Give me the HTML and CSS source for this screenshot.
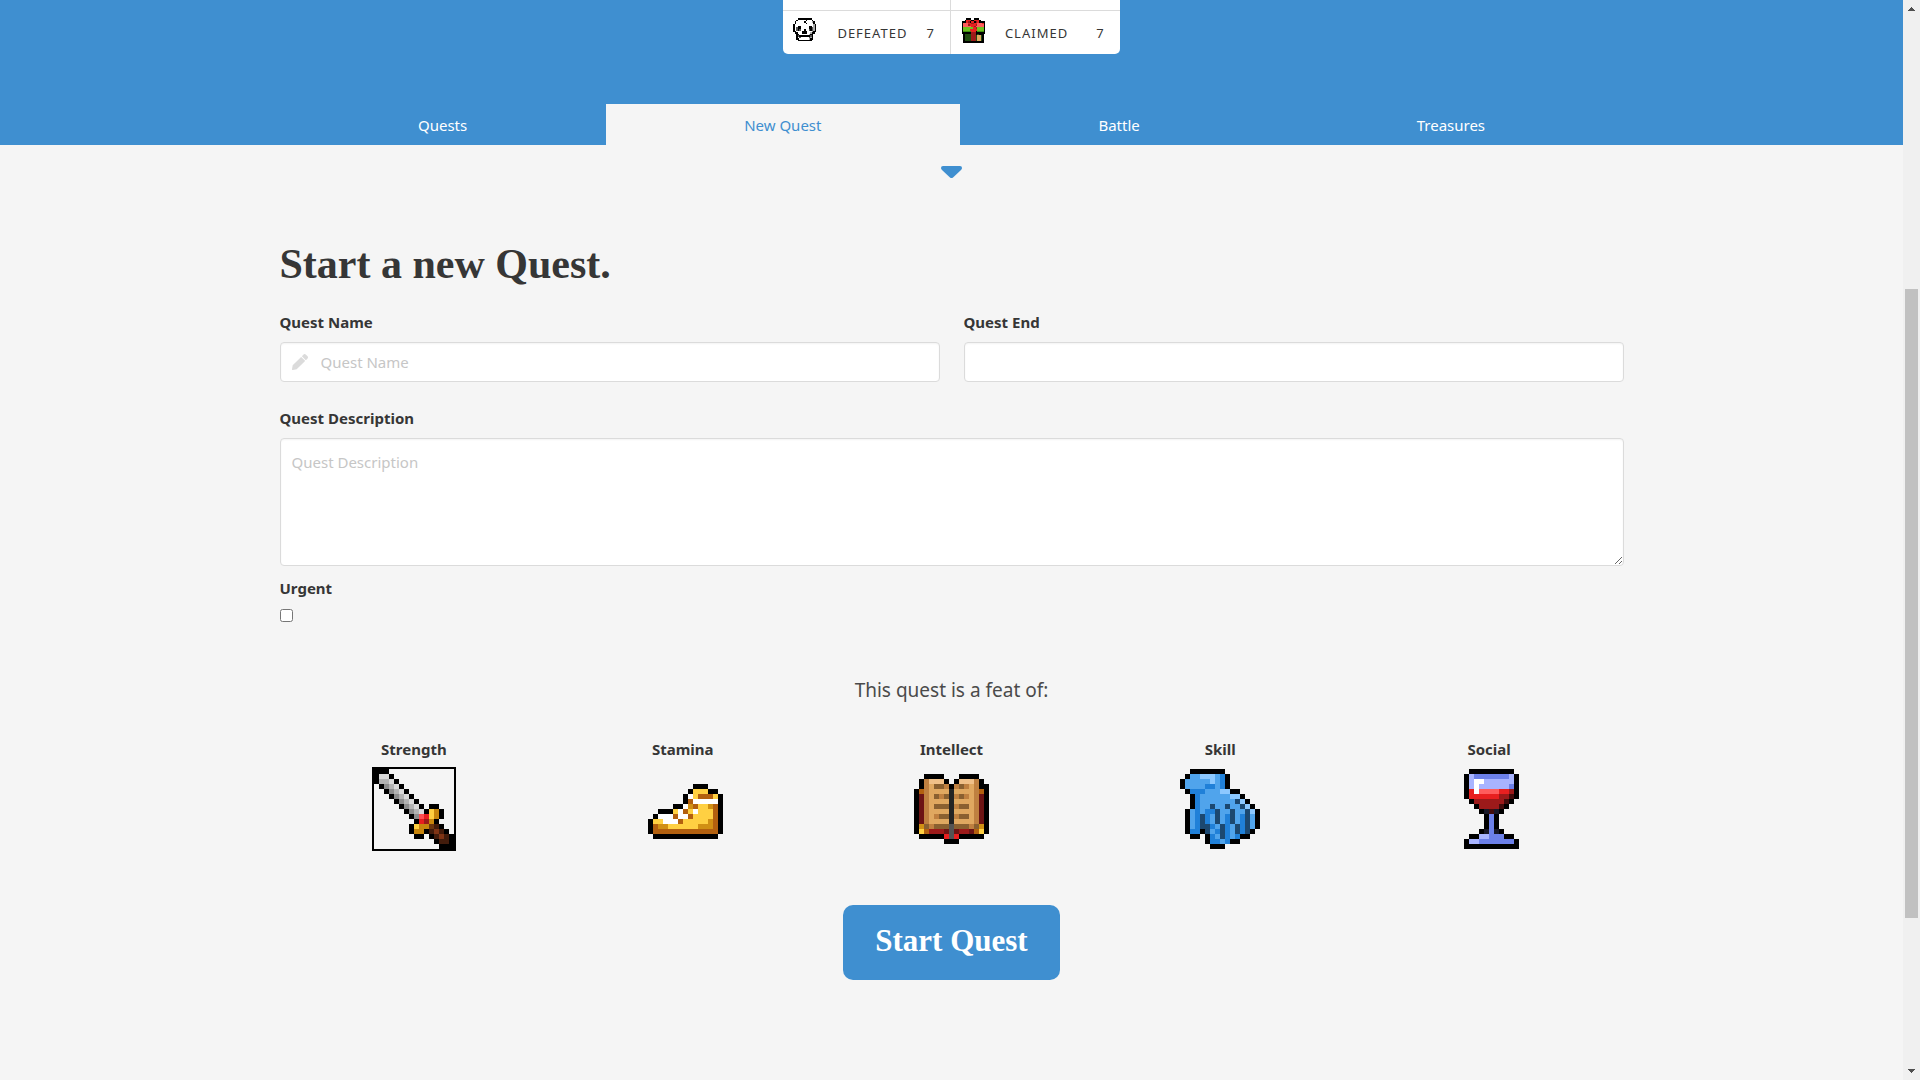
FILE: index.html
```html
<!DOCTYPE html>
<html lang="en">
<head>
<meta charset="utf-8">
<meta name="viewport" content="width=device-width, initial-scale=1">
<title>New Quest</title>
<link rel="stylesheet" href="styles.css">
</head>
<body>
<div class="page">
  <header class="hero">
    <table class="stats">
      <tbody>
        <tr class="stats-rest"><td colspan="3"></td><td colspan="3"></td></tr>
        <tr>
          <td class="stat-icon"><svg class="sprite" data-sprite="skull"></svg></td>
          <th scope="row">Defeated</th>
          <td class="stat-value">7</td>
          <td class="stat-icon stat-split"><svg class="sprite" data-sprite="gift"></svg></td>
          <th scope="row">Claimed</th>
          <td class="stat-value stat-last">7</td>
        </tr>
      </tbody>
    </table>
    <nav class="tabs">
      <a href="#quests">Quests</a>
      <a href="#new" class="active" aria-current="page">New Quest</a>
      <a href="#battle">Battle</a>
      <a href="#treasures">Treasures</a>
    </nav>
  </header>
  <main>
    <svg class="caret" viewBox="0 0 21 12"><path d="M2 0H19Q21 0 21 2Q21 3 20 4L12 11.400Q10.500 12.400 9 11.400L1 4Q0 3 0 2Q0 0 2 0Z"/></svg>
    <form class="container">
      <h1>Start a new Quest.</h1>
      <div class="columns">
        <div class="field">
          <label for="name">Quest Name</label>
          <div class="control">
            <input class="input has-icon" id="name" type="text" placeholder="Quest Name">
            <svg class="pencil" viewBox="0 0 512 512"><path d="M498 142l-46 46c-5 5-12 5-17 0L324 77c-5-5-5-12 0-17l46-46c19-19 49-19 68 0l60 60c19 19 19 49 0 68zM284 100L22 362 0 484c-3 16 11 31 28 28l122-22 262-262c5-5 5-12 0-17L301 100c-5-5-12-5-17 0z"/></svg>
          </div>
        </div>
        <div class="field">
          <label for="end">Quest End</label>
          <input class="input" id="end" type="text">
        </div>
      </div>
      <div class="field field-description">
        <label for="description">Quest Description</label>
        <textarea class="input" id="description" placeholder="Quest Description"></textarea>
      </div>
      <div class="field field-urgent">
        <label for="urgent">Urgent</label>
        <input id="urgent" type="checkbox">
      </div>
      <fieldset class="feats">
        <legend>This quest is a feat of:</legend>
        <div class="feat-list">
          <label class="feat">Strength<input type="radio" name="feat" checked><svg class="sprite" data-sprite="sword"></svg></label>
          <label class="feat">Stamina<input type="radio" name="feat"><svg class="sprite" data-sprite="shoe"></svg></label>
          <label class="feat">Intellect<input type="radio" name="feat"><svg class="sprite" data-sprite="book"></svg></label>
          <label class="feat">Skill<input type="radio" name="feat"><svg class="sprite" data-sprite="glove"></svg></label>
          <label class="feat">Social<input type="radio" name="feat"><svg class="sprite" data-sprite="goblet"></svg></label>
        </div>
      </fieldset>
      <button class="submit" type="button">Start Quest</button>
    </form>
  </main>
</div>
<div class="scrollbar" aria-hidden="true">
  <svg class="arrow" viewBox="0 0 17 17"><path d="M5 11V10H6V9H7V8H8V7H9V8H10V9H11V10H12V11Z"/></svg>
  <div class="thumb"></div>
  <svg class="arrow" viewBox="0 0 17 17"><path d="M5 6V7H6V8H7V9H8V10H9V9H10V8H11V7H12V6Z"/></svg>
</div>
<script src="sprites.js"></script>
</body>
</html>
```
FILE: styles.css
```css
* { box-sizing: border-box; }

body {
  margin: 0;
  display: flex;
  min-height: 100vh;
  background: #f5f5f5;
  color: #363636;
  font-family: "Noto Sans", "Open Sans", sans-serif;
  font-size: 15px;
  line-height: 24px;
}

.page { flex: 1; min-width: 0; }

.hero {
  background: #3f8fd0;
  display: flex;
  flex-direction: column;
  align-items: center;
}

.stats {
  border-collapse: separate;
  border-spacing: 0;
  margin-bottom: 50px;
  background: #fff;
  border-radius: 0 0 5px 5px;
  font-size: 13px;
}
.stats td, .stats th { padding: 0; height: 43px; font-weight: 400; text-align: left; }
.stats th { padding: 1px 19px 0; letter-spacing: 1px; text-transform: uppercase; }
.stats .stats-rest td { height: 11px; border-bottom: 1px solid #dbdbdb; }
.stats-rest td + td, .stats .stat-split { border-left: 1px solid #dbdbdb; }
.stats .stat-icon { padding: 0 0 4px 10px; }
.stats .stat-value { padding: 1px 16px 0 0; }
.stats .stat-last { padding-left: 9px; }
.stat-icon .sprite { display: block; width: 25px; height: 25px; }

.tabs { display: flex; width: 100%; max-width: 1344px; }
.tabs a {
  flex: 1 0 auto;
  padding: 9px 16px 8px;
  color: #fff;
  text-align: center;
  text-decoration: none;
}
.tabs a.active { background: #f5f5f5; color: #3f8fd0; }

.caret { display: block; width: 21px; height: 12px; margin: 21px auto 0; fill: #3f8fd0; }

.container { max-width: 1344px; margin: 0 auto; padding-top: 62px; }

h1 {
  margin: 0;
  font-family: "Liberation Serif", serif;
  font-size: 42px;
  line-height: 48px;
}

.columns { display: grid; grid-template-columns: 1fr 1fr; gap: 24px; margin-top: 22px; }
.field label { display: block; margin-bottom: 8px; font-weight: 700; }
.control { position: relative; }
.input {
  display: block;
  width: 100%;
  height: 40px;
  padding: 8px 11px;
  border: 1px solid #dbdbdb;
  border-radius: 4px;
  background: #fff;
  box-shadow: inset 0 1px 2px rgba(10, 10, 10, 0.05);
  color: #363636;
  font: inherit;
}
.input::placeholder { color: #c6c6c6; opacity: 1; }
.has-icon { padding-left: 40px; }
.pencil { position: absolute; left: 12px; top: 12px; width: 16px; height: 16px; fill: #dbdbdb; }
textarea.input { height: 128px; padding: 11px; resize: vertical; }
.field-description { margin-top: 24px; }
.field-urgent { margin-top: 10px; }
.field-urgent label { margin-bottom: 0; }
.field-urgent input { display: block; width: 13px; height: 13px; margin: 9px 0 0; }

.feats { min-width: 0; margin: 53px 0 0; padding: 0; border: 0; }
.feats legend {
  width: 100%;
  padding: 0;
  color: #4a4a4a;
  font-size: 19px;
  line-height: 30px;
  text-align: center;
}
.feat-list { display: grid; grid-template-columns: repeat(5, 1fr); padding-top: 32px; }
.feat { display: flex; flex-direction: column; align-items: center; gap: 6px; font-weight: 700; }
.feat input { position: absolute; opacity: 0; }
.feat .sprite { box-sizing: content-box; height: 80px; border: 2px solid transparent; }
.feat input:checked + .sprite { border-color: #000; }

.submit {
  display: block;
  margin: 54px auto 0;
  padding: 16px 32px 19px;
  border: 0;
  border-radius: 10px;
  background: #3f8fd0;
  color: #fff;
  font: 700 31px/40px "Liberation Serif", serif;
}

.scrollbar {
  position: sticky;
  top: 0;
  display: flex;
  flex-direction: column;
  width: 17px;
  height: 100vh;
  background: #f0f0f0;
}
.arrow { flex: none; height: 17px; fill: #505050; }
.arrow:first-child { order: 0; }
.scrollbar::before { content: ""; order: 1; flex: 272; }
.thumb { order: 2; flex: 629; margin: 0 2px; background: #c1c1c1; }
.scrollbar::after { content: ""; order: 3; flex: 145; }
.arrow:last-child { order: 4; }
```
FILE: sprites.js
```js
// Pixel art: one character for each pixel, "." is transparent.
const sprites = {
  sword: {
    colors: { k: "#000", l: "#d9d9d9", s: "#b3b3b3", m: "#8c8c8c", y: "#ffcf40", o: "#c8860d", r: "#ff5050", R: "#e81e1e", D: "#9c1a1a", b: "#6b3610", B: "#803415", d: "#421c0c" },
    rows: [
      "kkk.............",
      "kllk............",
      "ksslk...........",
      ".kmslk..........",
      "..kmslk.........",
      "...kmslk........",
      "....kmslk.......",
      ".....kmslk.kk...",
      "......kmslkyok..",
      ".......kmrRyok..",
      "........kRDok...",
      ".......kyoobdk..",
      ".......kookdBdk.",
      "........kk.kdBdk",
      "............kddk",
      ".............kkk"
    ]
  },
  shoe: {
    colors: { k: "#000", y: "#ffd042", g: "#d19014", o: "#b3600f", w: "#fff" },
    rows: [
      "................",
      "................",
      "................",
      "..........kkk...",
      ".........kyyykk.",
      "........kwyoooyk",
      "........kowwwwwk",
      "......kkwgoyygok",
      "...kkkywoywyyyok",
      "..kwwwowwoyyyyok",
      ".kyywwwoyyyyygok",
      ".koggyyyyyygggok",
      ".koooooooooooook",
      "..kkkkkkkkkkkkk.",
      "................",
      "................"
    ]
  },
  book: {
    colors: { k: "#000", K: "#242424", g: "#545454", l: "#f0c088", t: "#e0a860", d: "#bf8040", b: "#8a6030", o: "#b3600f", m: "#6d1414", r: "#9c1a1a", R: "#e82020", G: "#d19014", y: "#ffd042" },
    rows: [
      "...............",
      "..kkkk...kkkk..",
      ".kdlllk.kllldk.",
      ".kdtbbdkdbdtdkk",
      "kodttttKttttdok",
      "kmdtbdbKdbdtdmk",
      "kmdttttKttttdmk",
      "kmdtbbbKdbbtdmk",
      "kmdttttKttttdmk",
      "kmdtdbbKdbbtdmk",
      "kmdttttKttttdmk",
      "kGbdbbbgbbbdbGk",
      "kyorrrmgmrrmoyk",
      ".kkkkkRgRkkkkk.",
      "......kkk......",
      "..............."
    ]
  },
  glove: {
    colors: { k: "#000", l: "#8cc8ff", m: "#50a4ec", d: "#2080d8", n: "#1c4870" },
    rows: [
      "..kkkkkkk.......",
      ".kmmlllmdk......",
      "kmmmmmlmdk......",
      "kmmmmddmdk......",
      ".kdddmmmllkk....",
      "..kdmmmmmmllk...",
      "..kdmmmmmmmnlk..",
      "..kdmmnmmnmmnlk.",
      ".kmdmddnmmnmmnlk",
      ".kmdndmnmdnmdnmk",
      ".kmdndmnmdnmdnmk",
      ".kmdnndmndmndnmk",
      ".kddknmdndmndnk.",
      "..kk.kdmndmdkk..",
      ".....kddmdkk....",
      "......kkk......."
    ]
  },
  goblet: {
    colors: { k: "#000", P: "#a8b4ff", p: "#6c80e8", w: "#fff", r: "#e82020", l: "#ff5c5c", d: "#9c1a1a", v: "#420c0c", n: "#181828" },
    rows: [
      "....kkkkkkkkk...",
      "...kPpppppppPk..",
      "...kPwwPPPPPPk..",
      "...kPwPPPPPPpk..",
      "...krwllllrrdk..",
      "...krrrrrrddvk..",
      "....kddddddvk...",
      ".....kddddvk....",
      "......knvnk.....",
      ".......kpk......",
      ".......kpk......",
      ".......kpk......",
      "......knpnk.....",
      "....kkPPpppkk...",
      "...kPPpppppppk..",
      "...kkkkkkkkkkk.."
    ]
  },
  skull: {
    colors: { k: "#000", w: "#fff", s: "#aaa", g: "#555" },
    rows: [
      "...kkkkkkkkk....",
      "..kwwwwwkwwwk...",
      ".kwwwwwkwwwwsk..",
      ".kwwwwwwkwwwwk..",
      "kwwwwwwwwwwwwsk.",
      "kwwkkwwwwwkkwsk.",
      "kwgkkwwwwwkkgsk.",
      "kwgkgwwkwwgkgsk.",
      "kkwwwwkkkwwwskk.",
      ".kkwwwkkkwwskk..",
      "..kkwwwwwwskk...",
      "..kgkkkkkkkgk...",
      "..kwgwwwwwgsk...",
      "..kkwwwwwwskk...",
      "...kkkkkkkkk....",
      "................"
    ]
  },
  gift: {
    colors: { k: "#000", r: "#e82020", l: "#ff5c5c", d: "#9c1a1a", g: "#70c020", G: "#409010", n: "#204c10", t: "#e0a860" },
    rows: [
      "...kkk..kkk....",
      "..krrrkkrrrk...",
      "kkkrdkrrkdrkkkk",
      "klllrrddrrlllrk",
      "kllldrrrrdllllk",
      "klllllrrdlllllk",
      "kggggggrrdggggk",
      "kggggrrrrrggggk",
      "kGGGGGrrrkGGGGk",
      "kkkkkkdddkkkkkk",
      ".knnnndddknkkk.",
      ".knnnndddnttnk.",
      ".knnnndddnttnk.",
      ".knnnndddnttnk.",
      ".knnnndddnttnk.",
      ".kkkkkkkkkkkkk."
    ]
  }
};

document.querySelectorAll("[data-sprite]").forEach(svg => {
  const { colors, rows } = sprites[svg.dataset.sprite];
  svg.setAttribute("viewBox", `0 0 ${rows[0].length} ${rows.length}`);
  svg.setAttribute("shape-rendering", "crispEdges");
  svg.innerHTML = Object.entries(colors).map(([key, fill]) => {
    let d = "";
    rows.forEach((row, y) => [...row].forEach((c, x) => {
      if (c === key) d += `M${x} ${y}h1v1h-1z`;
    }));
    return `<path fill="${fill}" d="${d}"/>`;
  }).join("");
});
```
